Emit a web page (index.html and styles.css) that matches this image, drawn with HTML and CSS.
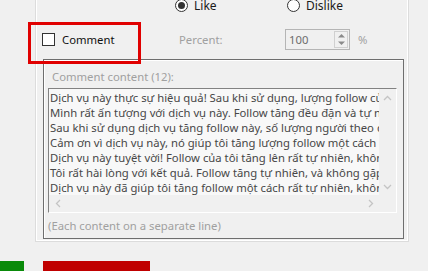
FILE: index.html
```html
<!DOCTYPE html>
<html lang="vi">
<head>
    <meta charset="UTF-8">
    <title>Comment settings</title>
    <link rel="stylesheet" href="styles.css">
</head>
<body>
    <!-- Khung đỏ đánh dấu -->
    <div class="mark"></div>

    <div class="panel">
        <!-- Like / Dislike -->
        <div class="radio-row">
            <label class="radio checked"><span class="dot"></span>Like</label>
            <label class="radio"><span class="dot"></span>Dislike</label>
        </div>

        <!-- Comment + Percent -->
        <div class="options-row">
            <label class="check"><span class="box"></span>Comment</label>
            <span class="muted percent-label">Percent:</span>
            <div class="spinner">
                <span class="spin-value">100</span>
                <span class="spin-buttons">
                    <svg width="9" height="5" viewBox="0 0 9 5"><path d="M1 4.5 L4.5 1 L8 4.5 Z" fill="#8a8a8a"/></svg>
                    <svg width="9" height="5" viewBox="0 0 9 5"><path d="M1 0.5 L4.5 4 L8 0.5 Z" fill="#8a8a8a"/></svg>
                </span>
            </div>
            <span class="muted">%</span>
        </div>

        <!-- Nội dung bình luận -->
        <div class="group">
            <div class="muted group-title">Comment content (12):</div>
            <div class="textbox">
                <div class="text-lines">
                    <div>Dịch vụ này thực sự hiệu quả! Sau khi sử dụng, lượng follow của tôi tăng lên nhanh chóng.</div>
                    <div>Mình rất ấn tượng với dịch vụ này. Follow tăng đều đặn và tự nhiên.</div>
                    <div>Sau khi sử dụng dịch vụ tăng follow này, số lượng người theo dõi tăng rõ rệt.</div>
                    <div>Cảm ơn vì dịch vụ này, nó giúp tôi tăng lượng follow một cách nhanh chóng.</div>
                    <div>Dịch vụ này tuyệt vời! Follow của tôi tăng lên rất tự nhiên, không bị giảm.</div>
                    <div>Tôi rất hài lòng với kết quả. Follow tăng tự nhiên, và không gặp vấn đề gì.</div>
                    <div>Dịch vụ này đã giúp tôi tăng follow một cách rất tự nhiên, không lo bị khóa.</div>
                </div>
                <div class="vscroll">
                    <svg width="9" height="6" viewBox="0 0 9 6"><path d="M1 5 L4.5 1.5 L8 5" fill="none" stroke="#c4c4c4" stroke-width="1.3"/></svg>
                    <svg width="9" height="6" viewBox="0 0 9 6"><path d="M1 1 L4.5 4.5 L8 1" fill="none" stroke="#c4c4c4" stroke-width="1.3"/></svg>
                </div>
                <div class="hscroll">
                    <svg width="6" height="9" viewBox="0 0 6 9"><path d="M5 1 L1.5 4.5 L5 8" fill="none" stroke="#c4c4c4" stroke-width="1.3"/></svg>
                    <svg width="6" height="9" viewBox="0 0 6 9"><path d="M1 1 L4.5 4.5 L1 8" fill="none" stroke="#c4c4c4" stroke-width="1.3"/></svg>
                </div>
                <div class="corner"></div>
            </div>
            <div class="muted hint">(Each content on a separate line)</div>
        </div>
    </div>

    <!-- Nút dưới -->
    <div class="bottom-bar">
        <div class="btn-green"></div>
        <div class="btn-red"></div>
    </div>
</body>
</html>
```

FILE: styles.css
```css
* {
    margin: 0;
    padding: 0;
    box-sizing: border-box;
}

body {
    font-family: "Noto Sans", "Open Sans", sans-serif;
    font-size: 11.3px;
    color: #1a1a1a;
    background: #f0f0f0;
    width: 428px;
    height: 271px;
    overflow: hidden;
    position: relative;
}

/* Khung đỏ */
.mark {
    position: absolute;
    left: 28px;
    top: 22px;
    width: 113px;
    height: 42px;
    border: 3px solid #e00000;
    z-index: 5;
}

/* Panel ngoài */
.panel {
    margin-top: -6px;
    margin-left: 35px;
    width: 374px;
    height: 248px;
    border: 1px solid #dcdcdc;
    border-top: none;
    box-shadow: inset 1px 0 0 #fff, inset -1px 0 0 #fff, inset 0 -1px 0 #fff;
}

.radio-row {
    height: 22px;
    display: flex;
    align-items: center;
    padding-left: 139px;
    font-size: 12px;
}

.radio {
    display: flex;
    align-items: center;
    gap: 6px;
    width: 112px;
}

.radio .dot {
    width: 13px;
    height: 13px;
    border: 1px solid #333;
    border-radius: 50%;
    background: #fff;
    display: flex;
    align-items: center;
    justify-content: center;
}

.radio.checked .dot::after {
    content: "";
    width: 7px;
    height: 7px;
    border-radius: 50%;
    background: #333;
}

.options-row {
    height: 21px;
    margin-top: 13px;
    display: flex;
    align-items: center;
    padding-left: 6px;
}

.check {
    display: flex;
    align-items: center;
    gap: 7px;
    width: 137px;
    color: #111;
}

.check .box {
    width: 13px;
    height: 13px;
    border: 1px solid #333;
    background: #fff;
}

.muted {
    color: #a0a0a0;
}

.percent-label {
    width: 106px;
}

.spinner {
    width: 65px;
    height: 21px;
    border: 1px solid #b5b5b5;
    display: flex;
    align-items: center;
    justify-content: space-between;
    padding: 0 1px 0 3px;
    margin-right: 8px;
}

.spin-value {
    color: #6d6d6d;
}

.spin-buttons {
    width: 14px;
    height: 17px;
    border: 1px solid #d0d0d0;
    display: flex;
    flex-direction: column;
    align-items: center;
    justify-content: space-around;
}

/* Group nội dung */
.group {
    margin-top: 9px;
    margin-left: 7px;
    width: 361px;
    height: 180px;
    border: 1px solid #6e6e6e;
    box-shadow: inset 1px 1px 0 #fff;
    padding: 9px 0 0 4px;
}

.group-title {
    height: 15px;
    line-height: 15px;
    padding-left: 4px;
}

.textbox {
    margin-top: 4px;
    width: 349px;
    height: 125px;
    border: 1px solid;
    border-color: #828282 #fff #fff #828282;
    display: grid;
    grid-template-columns: 330px 17px;
    grid-template-rows: 106px 17px;
    background: #f0f0f0;
}

.text-lines {
    background: #f8f8f8;
    color: #474747;
    line-height: 15px;
    padding: 1px 0 0 1px;
    white-space: nowrap;
    overflow: hidden;
}

.vscroll {
    display: flex;
    flex-direction: column;
    align-items: center;
    justify-content: space-between;
    padding: 6px 0 5px;
}

.hscroll {
    display: flex;
    align-items: center;
    justify-content: space-between;
    padding: 0 5px 0 6px;
}

.hint {
    margin-top: 5px;
    height: 15px;
    line-height: 15px;
}

/* Нижние кнопки */
.bottom-bar {
    margin-top: 19px;
    display: flex;
    gap: 19px;
}

.btn-green {
    width: 24px;
    height: 12px;
    background: #0a8a0a;
}

.btn-red {
    width: 107px;
    height: 12px;
    background: #c00000;
}
```
